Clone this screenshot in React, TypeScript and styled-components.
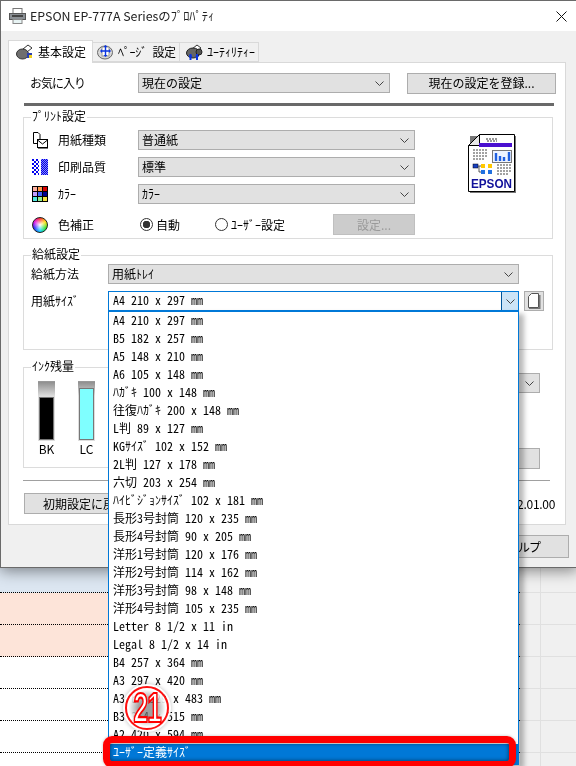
import * as React from "react";
import styled, { createGlobalStyle } from "styled-components";

const GlobalStyle = createGlobalStyle`
  html, body {
    margin: 0;
    padding: 0;
    background: #fff;
  }
  * {
    box-sizing: border-box;
  }
`;

const paperSizes = [
  "A4 210 x 297 mm",
  "B5 182 x 257 mm",
  "A5 148 x 210 mm",
  "A6 105 x 148 mm",
  "ﾊｶﾞｷ 100 x 148 mm",
  "往復ﾊｶﾞｷ 200 x 148 mm",
  "L判 89 x 127 mm",
  "KGｻｲｽﾞ 102 x 152 mm",
  "2L判 127 x 178 mm",
  "六切 203 x 254 mm",
  "ﾊｲﾋﾞｼﾞｮﾝｻｲｽﾞ 102 x 181 mm",
  "長形3号封筒 120 x 235 mm",
  "長形4号封筒 90 x 205 mm",
  "洋形1号封筒 120 x 176 mm",
  "洋形2号封筒 114 x 162 mm",
  "洋形3号封筒 98 x 148 mm",
  "洋形4号封筒 105 x 235 mm",
  "Letter 8 1/2 x 11 in",
  "Legal 8 1/2 x 14 in",
  "B4 257 x 364 mm",
  "A3 297 x 420 mm",
  "A3ﾉﾋﾞ 329 x 483 mm",
  "B3 364 x 515 mm",
  "A2 420 x 594 mm",
];

const sheetRows = [
  { height: 25, fill: "#dce6f1" },
  { height: 32, fill: "#fde4d9" },
  { height: 32, fill: "#fde4d9" },
  { height: 32, fill: "#ffffff" },
  { height: 32, fill: "#ffffff" },
  { height: 32, fill: "#ffffff" },
  { height: 32, fill: "#ffffff" },
];

const Chevron = () => (
  <svg width="9" height="5" viewBox="0 0 9 5">
    <polyline points="0.5,0.5 4.5,4.5 8.5,0.5" fill="none" stroke="#444" strokeWidth="1" />
  </svg>
);

const PrinterIcon = () => (
  <svg width="17" height="16" viewBox="0 0 17 16">
    <rect x="4" y="0.5" width="9" height="5" fill="#fff" stroke="#777" />
    <rect x="0.5" y="5.5" width="16" height="6" fill="#8a8f94" stroke="#555" />
    <rect x="3" y="7" width="11" height="2" fill="#444" />
    <rect x="4" y="11.5" width="9" height="4" fill="#e8f4f4" stroke="#888" />
  </svg>
);

const BasicTabIcon = () => (
  <svg width="17" height="16" viewBox="0 0 17 16">
    <polygon points="7,5 12,1 16,4 11,8" fill="#fff" stroke="#333" />
    <ellipse cx="6.5" cy="10" rx="6" ry="5" fill="#6f6f6f" stroke="#333" />
    <rect x="11" y="9" width="5" height="5" fill="#2a3fb0" />
    <rect x="13" y="11" width="3" height="3" fill="#f2d21f" />
  </svg>
);

const PageTabIcon = () => (
  <svg width="16" height="16" viewBox="0 0 16 16">
    <ellipse cx="8" cy="8.5" rx="7.5" ry="6.5" fill="#d8d8d8" stroke="#666" />
    <rect x="5" y="3" width="7" height="9" fill="#fff" stroke="#999" />
    <path d="M8.5 2v10M4 7h9" stroke="#0a35e0" strokeWidth="1.4" />
    <path d="M8.5 1l2 2h-4zM8.5 13l2-2h-4zM3 7l2-2v4zM14 7l-2-2v4z" fill="#0a35e0" />
  </svg>
);

const UtilityTabIcon = () => (
  <svg width="17" height="17" viewBox="0 0 17 17">
    <polygon points="6,5 11,1 15,4 10,8" fill="#fff" stroke="#333" />
    <ellipse cx="7" cy="9" rx="6.5" ry="5" fill="#666" stroke="#222" />
    <ellipse cx="13" cy="8" rx="3" ry="3" fill="#555" stroke="#222" />
    <path d="M4.5 10v6M11 10v6" stroke="#0a35e0" strokeWidth="2" />
    <path d="M2.5 13l2-3 2 3zM9 13l2-3 2 3z" fill="#0a35e0" />
  </svg>
);

const PaperIcon = () => (
  <svg width="16" height="17" viewBox="0 0 16 17">
    <polygon points="1.5,0.5 6,0.5 8,2.5 8,11.5 1.5,11.5" fill="#fff" stroke="#000" />
    <rect x="5.5" y="7.5" width="10" height="8" fill="#fff" stroke="#000" />
    <polyline points="5.5,8 10.5,12 15.5,8" fill="none" stroke="#000" />
    <rect x="6" y="16" width="10" height="1" fill="#777" />
  </svg>
);

const QualityIcon = () => (
  <svg width="16" height="16" viewBox="0 0 16 16">
    <defs>
      <pattern id="coarse" width="4" height="4" patternUnits="userSpaceOnUse">
        <rect width="4" height="4" fill="#fff" />
        <rect width="2" height="2" fill="#0000f0" />
        <rect x="2" y="2" width="2" height="2" fill="#0000f0" />
      </pattern>
      <pattern id="fine" width="2" height="2" patternUnits="userSpaceOnUse">
        <rect width="2" height="2" fill="#8888ff" />
        <rect width="1" height="1" fill="#0000e0" />
        <rect x="1" y="1" width="1" height="1" fill="#0000e0" />
      </pattern>
    </defs>
    <rect width="7" height="16" fill="url(#coarse)" />
    <rect x="9" width="7" height="16" fill="url(#fine)" />
  </svg>
);

const colorCells = [
  "#ffb0a0", "#ff9a50", "#d80000",
  "#c0a0ff", "#4060ff", "#000090",
  "#50e8e0", "#90f090", "#f0e040",
];

const ColorGridIcon = () => (
  <svg width="16" height="16" viewBox="0 0 16 16">
    <rect width="16" height="16" fill="#000" />
    {colorCells.map((fill, i) => (
      <rect key={fill} x={1 + (i % 3) * 5} y={1 + Math.floor(i / 3) * 5} width="4" height="4" fill={fill} />
    ))}
  </svg>
);

const PageIcon = () => (
  <svg width="13" height="16" viewBox="0 0 13 16">
    <polygon points="3.5,0.5 10.5,0.5 10.5,14.5 0.5,14.5 0.5,3.5" fill="#fff" stroke="#555" />
    <rect x="11" y="2" width="1.5" height="14" fill="#777" />
    <rect x="1" y="15" width="11" height="1" fill="#777" />
  </svg>
);

const CloseIcon = () => (
  <svg width="11" height="11" viewBox="0 0 11 11">
    <path d="M0.5 0.5l10 10M10.5 0.5l-10 10" stroke="#111" strokeWidth="1" />
  </svg>
);

const EpsonIcon = () => (
  <svg width="48" height="59" viewBox="0 0 48 59">
    <rect x="2" y="2" width="46" height="57" fill="#777" />
    <polygon points="11.5,0.5 46.5,0.5 46.5,57.5 0.5,57.5 0.5,11.5" fill="#fff" stroke="#000" />
    <polygon points="0.5,11.5 11.5,0.5 11.5,11.5" fill="#e8e8e8" stroke="#000" />
    <path d="M18 5h12M19 7h10" stroke="#333" strokeWidth="1" strokeDasharray="2 1" />
    <rect x="11" y="9" width="33" height="4" fill="#4a10d0" />
    <path d="M5 16h14M5 19h14M5 22h14M5 25h12" stroke="#444" strokeWidth="1" strokeDasharray="2 1" />
    <rect x="24.5" y="16.5" width="19" height="12" fill="#eef4ff" stroke="#777" />
    <path d="M28 27v-8M32 27v-5M36 27v-4M41 27v-9" stroke="#2060e0" strokeWidth="2.4" />
    <rect x="5" y="30" width="5" height="4" fill="#1840c0" stroke="#001" strokeWidth="0.5" />
    <rect x="13" y="30" width="4" height="4" fill="#ffc800" />
    <rect x="20" y="30" width="4" height="4" fill="#ffc800" />
    <rect x="13" y="36" width="4" height="4" fill="#2070e0" />
    <rect x="20" y="36" width="4" height="4" fill="#2070e0" />
    <path d="M10 32h3M11 32v6h2" stroke="#333" fill="none" strokeWidth="0.8" />
    <path d="M29 31h14M29 34h14M29 37h14M29 40h12" stroke="#444" strokeWidth="1" strokeDasharray="2 1" />
    <text
      x="3"
      y="54"
      textLength="41"
      lengthAdjust="spacingAndGlyphs"
      fontFamily="Liberation Sans, sans-serif"
      fontWeight="700"
      fontSize="13"
      fill="#10109a"
    >
      EPSON
    </text>
  </svg>
);

const App: React.FunctionComponent = () => (
  <Page>
    <GlobalStyle />
    <Dialog>
      <TitleBar>
        <TitleIcon>
          <PrinterIcon />
        </TitleIcon>
        <TitleText>
          EPSON EP-777A Seriesの<TitleKana>ﾌﾟﾛﾊﾟﾃｨ</TitleKana>
        </TitleText>
        <CloseIcon />
      </TitleBar>

      <TabRow>
        <Tab $active $width={85} $pad={7} $gap={5}>
          <BasicTabIcon />
          基本設定
        </Tab>
        <Tab $width={88} $pad={4} $gap={5}>
          <PageTabIcon />
          <PageTabText>ﾍﾟｰｼﾞ 設定</PageTabText>
        </Tab>
        <Tab $width={80} $pad={6} $gap={4}>
          <UtilityTabIcon />
          ﾕｰﾃｨﾘﾃｨｰ
        </Tab>
      </TabRow>

      <Panel>
        <FavoriteRow>
          <FavoriteLabel>お気に入り</FavoriteLabel>
          <Select $width={252}>
            現在の設定
            <Chevron />
          </Select>
          <RegisterButton $width={149}>現在の設定を登録...</RegisterButton>
        </FavoriteRow>
        <ThickRule />

        <PrintGroup>
          <Legend>ﾌﾟﾘﾝﾄ設定</Legend>
          <PrintRows>
            <PrintRow>
              <RowIcon>
                <PaperIcon />
              </RowIcon>
              <Label>用紙種類</Label>
              <Select $width={277}>
                普通紙
                <Chevron />
              </Select>
            </PrintRow>
            <PrintRow>
              <RowIcon>
                <QualityIcon />
              </RowIcon>
              <Label>印刷品質</Label>
              <Select $width={277}>
                標準
                <Chevron />
              </Select>
            </PrintRow>
            <PrintRow>
              <RowIcon>
                <ColorGridIcon />
              </RowIcon>
              <Label>ｶﾗｰ</Label>
              <Select $width={277}>
                ｶﾗｰ
                <Chevron />
              </Select>
            </PrintRow>
            <CorrectionRow>
              <RowIcon>
                <ColorBall />
              </RowIcon>
              <Label>色補正</Label>
              <RadioList>
                <RadioOption $width={75}>
                  <Radio $checked />
                  自動
                </RadioOption>
                <RadioOption $width={118}>
                  <Radio />
                  ﾕｰｻﾞｰ設定
                </RadioOption>
                <DisabledButton>設定...</DisabledButton>
              </RadioList>
            </CorrectionRow>
          </PrintRows>
          <EpsonSlot>
            <EpsonIcon />
          </EpsonSlot>
        </PrintGroup>

        <FeedGroup>
          <Legend>給紙設定</Legend>
          <FeedRow>
            <FeedLabel>給紙方法</FeedLabel>
            <Select $width={411}>
              用紙ﾄﾚｲ
              <Chevron />
            </Select>
          </FeedRow>
          <FeedRow>
            <FeedLabel>用紙ｻｲｽﾞ</FeedLabel>
            <Combo>
              <ComboText>A4 210 x 297 mm</ComboText>
              <ComboArrow>
                <Chevron />
              </ComboArrow>
              <DropList>
                {paperSizes.map((size) => (
                  <DropItem key={size}>{size}</DropItem>
                ))}
                <DropItem $selected>ﾕｰｻﾞｰ定義ｻｲｽﾞ</DropItem>
                <Badge>
                  <BadgeNumber>21</BadgeNumber>
                </Badge>
                <Highlight />
              </DropList>
            </Combo>
            <PageButton>
              <PageIcon />
            </PageButton>
          </FeedRow>
        </FeedGroup>

        <InkRow>
          <InkGroup>
            <Legend>ｲﾝｸ残量</Legend>
            <InkColumn>
              <InkFrame>
                <InkFill $level={43} $color="#000000" />
              </InkFrame>
              BK
            </InkColumn>
            <InkColumn>
              <InkFrame>
                <InkFill $level={52} $color="#7fffff" />
              </InkFrame>
              LC
            </InkColumn>
          </InkGroup>
          <InkSide>
            <Select $width={120}>
              <span />
              <Chevron />
            </Select>
            <Button $width={120} />
          </InkSide>
        </InkRow>

        <ThinRule />
        <FooterRow>
          <Button $width={122}>初期設定に戻す</Button>
          <Version>Version 12.01.00</Version>
        </FooterRow>
      </Panel>

      <DialogFooter>
        <HelpButton>ヘルプ</HelpButton>
      </DialogFooter>
    </Dialog>

    <Sheet>
      {sheetRows.map((row, i) => (
        <SheetRow key={i} $height={row.height}>
          <SheetCell $fill={row.fill} />
          <GreyCell $divider />
          <GreyCell />
        </SheetRow>
      ))}
    </Sheet>
  </Page>
);

export default App;

const Page = styled.div`
  position: relative;
  width: 576px;
  height: 766px;
  overflow: hidden;
  font-family: "Noto Sans CJK JP", "Liberation Sans", sans-serif;
  font-size: 12px;
  line-height: 14px;
  color: #000;
  font-feature-settings: "hwid";
  will-change: transform;
`;

const Dialog = styled.div`
  position: relative;
  z-index: 2;
  width: 578px;
  height: 568px;
  background: #f0f0f0;
  border: 1px solid #6a6a6a;
  border-right: 0;
  box-shadow: 0 3px 14px rgba(0, 0, 0, 0.45);
`;

const TitleBar = styled.div`
  display: flex;
  align-items: center;
  height: 30px;
  padding: 0 11px 0 8px;
  background: #fff;
`;

const TitleIcon = styled.div`
  display: flex;
  width: 21px;
`;

const TitleText = styled.div`
  flex: 1;
  font-size: 12.4px;
  font-feature-settings: normal;
  color: #222;
`;

const TitleKana = styled.span`
  font-feature-settings: "hwid";
`;

const TabRow = styled.div`
  position: relative;
  z-index: 1;
  display: flex;
  align-items: flex-end;
  height: 31px;
  padding-left: 7px;
`;

const Tab = styled.div<{ $active?: boolean; $width: number; $pad: number; $gap: number }>`
  display: flex;
  flex: none;
  align-items: center;
  gap: ${(p) => p.$gap}px;
  width: ${(p) => p.$width}px;
  height: ${(p) => (p.$active ? "23px" : "20px")};
  padding-left: ${(p) => p.$pad}px;
  white-space: nowrap;
  background: ${(p) => (p.$active ? "#fff" : "#f0f0f0")};
  border: 1px solid #d9d9d9;
  border-bottom: ${(p) => (p.$active ? "0" : "1px solid #d9d9d9")};
  margin-bottom: ${(p) => (p.$active ? "-1px" : "0")};
  margin-right: -1px;
`;

const PageTabText = styled.span`
  letter-spacing: -0.4px;
`;

const Panel = styled.div`
  width: 558px;
  height: 463px;
  margin-left: 7px;
  padding: 10px 9px 0 14px;
  background: #fff;
  border: 1px solid #d9d9d9;
`;

const FavoriteRow = styled.div`
  display: flex;
  align-items: center;
  height: 20px;
  padding-left: 7px;
`;

const FavoriteLabel = styled.div`
  width: 108px;
  letter-spacing: -1px;
`;

const Select = styled.div<{ $width: number }>`
  display: flex;
  flex: none;
  align-items: center;
  justify-content: space-between;
  width: ${(p) => p.$width}px;
  height: 20px;
  padding: 0 5px 0 3px;
  background: #e1e1e1;
  border: 1px solid #adadad;
`;

const Button = styled.div<{ $width: number }>`
  display: flex;
  flex: none;
  align-items: center;
  justify-content: center;
  width: ${(p) => p.$width}px;
  height: 21px;
  background: #e1e1e1;
  border: 1px solid #adadad;
  font-feature-settings: normal;
`;

const RegisterButton = styled(Button)`
  margin-left: 17px;
`;

const ThickRule = styled.div`
  width: 530px;
  height: 3px;
  margin: 10px 0 11px 1px;
  background: #696969;
`;

const Group = styled.div`
  position: relative;
  border: 1px solid #dcdcdc;
`;

const Legend = styled.div`
  position: absolute;
  top: -9px;
  left: 7px;
  padding: 0 1px;
  background: #fff;
`;

const PrintGroup = styled(Group)`
  display: flex;
  width: 530px;
  height: 122px;
  padding: 12px 0 0 8px;
`;

const PrintRows = styled.div`
  display: flex;
  flex-direction: column;
  gap: 7px;
`;

const PrintRow = styled.div`
  display: flex;
  align-items: center;
  height: 20px;
`;

const CorrectionRow = styled(PrintRow)`
  height: 21px;
  margin-top: 3px;
`;

const RowIcon = styled.div`
  display: flex;
  width: 26px;
`;

const Label = styled.div`
  width: 80px;
`;

const ColorBall = styled.div`
  width: 16px;
  height: 16px;
  border-radius: 50%;
  border: 1px solid #222;
  background: radial-gradient(circle, #fff 0%, rgba(255, 255, 255, 0) 70%),
    conic-gradient(#ff2020, #ffe000, #20e020, #00d0ff, #2020ff, #e000e0, #ff2020);
`;

const RadioList = styled.div`
  display: flex;
  align-items: center;
  width: 277px;
  padding-left: 2px;
`;

const RadioOption = styled.div<{ $width: number }>`
  display: flex;
  align-items: center;
  gap: 3px;
  width: ${(p) => p.$width}px;
`;

const Radio = styled.div<{ $checked?: boolean }>`
  flex: none;
  width: 13px;
  height: 13px;
  border: 1px solid #333;
  border-radius: 50%;
  background: ${(p) => (p.$checked ? "radial-gradient(circle, #333 0 3.5px, #fff 4px)" : "#fff")};
`;

const DisabledButton = styled.div`
  display: flex;
  align-items: center;
  justify-content: center;
  width: 82px;
  height: 21px;
  background: #ccc;
  border: 1px solid #bfbfbf;
  color: #9a9a9a;
  font-feature-settings: normal;
`;

const EpsonSlot = styled.div`
  margin: 4px 0 0 53px;
`;

const FeedGroup = styled(Group)`
  width: 530px;
  height: 95px;
  margin-top: 16px;
  padding: 8px 0 0 7px;
`;

const FeedRow = styled.div`
  display: flex;
  align-items: center;
  height: 20px;
  margin-bottom: 7px;
`;

const FeedLabel = styled.div`
  width: 77px;
`;

const Combo = styled.div`
  position: relative;
  display: flex;
  width: 411px;
  height: 20px;
  border: 1px solid #0078d7;
  background: #fff;
`;

const ComboText = styled.div`
  flex: 1;
  padding-left: 4px;
  line-height: 16px;
`;

const ComboArrow = styled.div`
  display: flex;
  align-items: center;
  justify-content: center;
  width: 17px;
  background: #cce4f7;
  border-left: 1px solid #005499;
`;

const DropList = styled.div`
  position: absolute;
  z-index: 5;
  top: 18px;
  left: -1px;
  width: 411px;
  background: #fff;
  border: 1px solid #0078d7;
  border-top-width: 2px;
  box-shadow: 5px 4px 5px rgba(0, 0, 0, 0.28);
`;

const DropItem = styled.div<{ $selected?: boolean }>`
  height: ${(p) => (p.$selected ? "20px" : "18px")};
  padding-left: 4px;
  line-height: 16px;
  white-space: nowrap;
  color: ${(p) => (p.$selected ? "#fff" : "#000")};
  background: ${(p) => (p.$selected ? "#0078d7" : "transparent")};
`;

const Highlight = styled.div`
  position: absolute;
  top: 424px;
  left: -6px;
  width: 413px;
  height: 32px;
  border: 7px solid #ff0000;
  border-radius: 9px;
  box-shadow: inset 0 0 4px rgba(0, 0, 0, 0.6), 0 0 3px rgba(0, 0, 0, 0.25);
`;

const Badge = styled.div`
  position: absolute;
  top: 374px;
  left: 16px;
  display: flex;
  align-items: center;
  justify-content: center;
  width: 44px;
  height: 44px;
  border: 2px solid #ff1010;
  border-radius: 50%;
  background: radial-gradient(circle, rgba(120, 120, 120, 0.7) 0 30%, rgba(255, 255, 255, 0.92) 66%);
  box-shadow: 0 0 0 2px #fff, 0 0 4px 2px rgba(0, 0, 0, 0.25);
`;

const BadgeNumber = styled.div`
  font-family: "Liberation Sans", sans-serif;
  font-size: 42px;
  font-weight: 700;
  letter-spacing: -1px;
  line-height: 42px;
  color: #fff;
  -webkit-text-stroke: 2.2px #ff0000;
  transform: scaleX(0.62);
`;

const PageButton = styled.div`
  display: flex;
  align-items: center;
  justify-content: center;
  width: 20px;
  height: 20px;
  margin-left: 5px;
  background: #e1e1e1;
  border: 1px solid #adadad;
`;

const InkRow = styled.div`
  display: flex;
  justify-content: space-between;
  width: 530px;
  margin-top: 17px;
`;

const InkGroup = styled(Group)`
  display: flex;
  gap: 23px;
  width: 380px;
  height: 101px;
  padding: 13px 0 0 14px;
`;

const InkColumn = styled.div`
  display: flex;
  flex-direction: column;
  align-items: center;
  gap: 1px;
  width: 17px;
  font-feature-settings: normal;
`;

const InkFrame = styled.div`
  display: flex;
  flex-direction: column;
  justify-content: flex-end;
  width: 17px;
  height: 60px;
  padding: 0 1px 1px;
  background: linear-gradient(180deg, #8f8f8f, #dddddd 14px, #dddddd 100%);
  border-top: 1px solid #999;
`;

const InkFill = styled.div<{ $level: number; $color: string }>`
  height: ${(p) => p.$level}px;
  background: ${(p) => p.$color};
  border: 1px solid #777;
`;

const InkSide = styled.div`
  display: flex;
  flex-direction: column;
  align-items: flex-end;
  gap: 55px;
  height: 101px;
  padding: 6px 13px 0 0;
`;

const ThinRule = styled.div`
  width: 527px;
  height: 1px;
  margin-top: 12px;
  background: #a0a0a0;
`;

const FooterRow = styled.div`
  display: flex;
  align-items: center;
  justify-content: space-between;
  width: 531px;
  margin: 12px 0 0 1px;
`;

const Version = styled.div`
  font-feature-settings: normal;
  letter-spacing: -0.3px;
`;

const DialogFooter = styled.div`
  display: flex;
  justify-content: flex-end;
  padding: 10px 9px 0 0;
`;

const HelpButton = styled.div`
  display: flex;
  align-items: center;
  justify-content: center;
  width: 91px;
  height: 23px;
  background: #e1e1e1;
  border: 1px solid #adadad;
  letter-spacing: -1px;
  font-feature-settings: normal;
`;

const Sheet = styled.div`
  display: flex;
  flex-direction: column;
`;

const SheetRow = styled.div<{ $height: number }>`
  display: grid;
  grid-template-columns: 520px 21px 1fr;
  height: ${(p) => p.$height}px;
`;

const SheetCell = styled.div<{ $fill: string }>`
  background: ${(p) => p.$fill};
  border-bottom: 1px dotted #000;
`;

const GreyCell = styled.div<{ $divider?: boolean }>`
  background: #f0f0f0;
  border-bottom: 1px solid #e0e0e0;
  border-right: ${(p) => (p.$divider ? "1px solid #e0e0e0" : "0")};
`;
